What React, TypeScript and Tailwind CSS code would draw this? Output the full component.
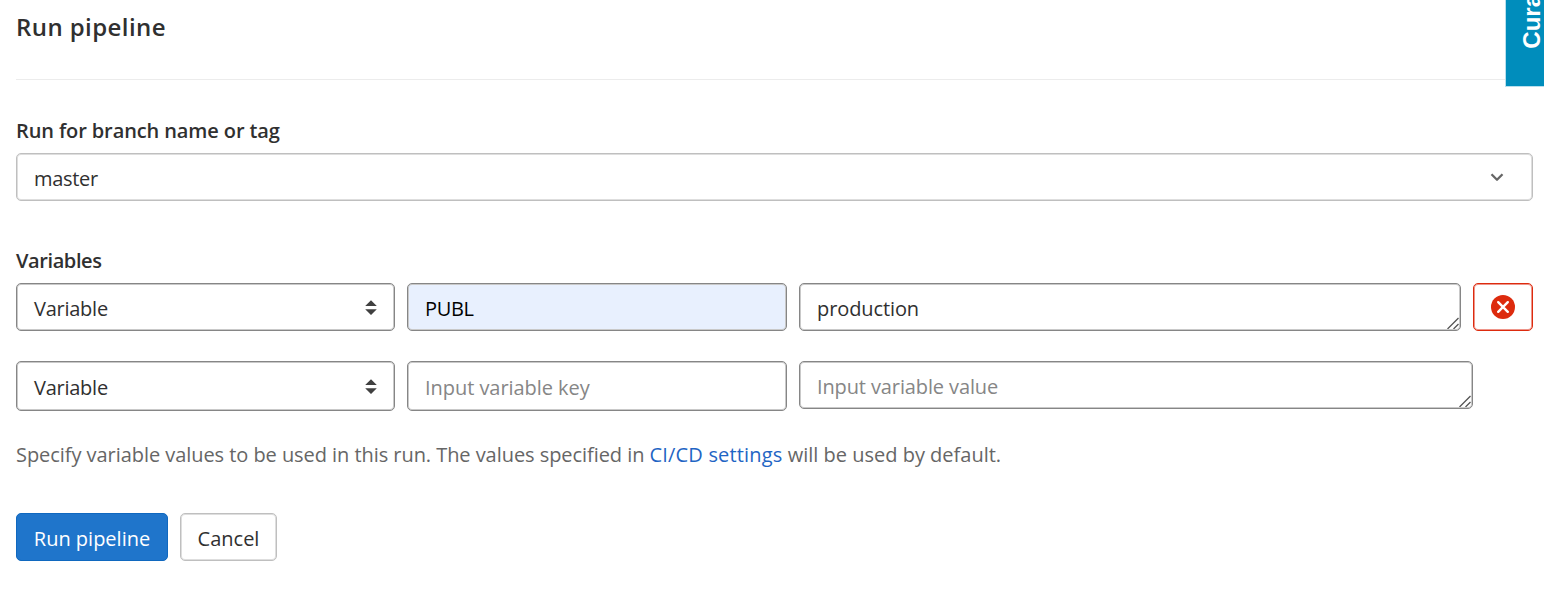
const box = "flex items-center rounded-[5px] border pl-[17px] whitespace-nowrap";
const field = `${box} border-[#868686] shadow-[inset_0_0_0_1px_#c9c9c9]`;

function SortArrows() {
  return (
    <svg className="mt-px mr-4 h-[16px] w-[14px] shrink-0" viewBox="0 0 14 16" fill="#404040">
      <path d="M7 0.3 12.8 6.1H1.2zM7 15 1.2 9.2h11.6z" />
    </svg>
  );
}

function ResizeGrip() {
  return (
    <svg className="mr-[1px] mb-[1px] ml-auto h-[12px] w-[12px] self-end" viewBox="0 0 12 12" fill="none" stroke="#555" strokeWidth="1.3">
      <path d="M0.5 12 11.5 1M6.5 12 11.5 7" />
    </svg>
  );
}

function TypeSelect({ height }: { height: string }) {
  return (
    <div className={`${field} ${height} justify-between`}>
      <span className="pt-[3px] tracking-[-0.25px]">Variable</span>
      <SortArrows />
    </div>
  );
}

export default function App() {
  return (
    <main className="relative h-[594px] w-[1544px] overflow-hidden bg-white pr-[11px] pl-4 font-['Open_Sans','Noto_Sans',sans-serif] text-[20px] text-[#303030]">
      <header className="h-20 border-b border-[#ececec] pt-[9px]">
        <h1 className="text-[24px] leading-9 font-semibold tracking-[0.42px]">Run pipeline</h1>
      </header>
      <section className="pt-9">
        <h2 className="h-[30px] leading-[30px] font-semibold tracking-[-0.11px]">Run for branch name or tag</h2>
        <div className={`${box} mt-[7px] h-12 border-[#bfbfbf] pr-7 shadow-[inset_0_0_0_1px_#dedede]`}>
          <span className="pt-[3px] tracking-[-0.3px]">master</span>
          <svg className="ml-auto h-[14px] w-[14px]" viewBox="0 0 14 14" fill="none" stroke="#666" strokeWidth="2.3" strokeLinejoin="round">
            <path d="M1.5 4.3 7 9.8 12.5 4.3" />
          </svg>
        </div>
      </section>
      <section className="pt-[45px]">
        <h2 className="h-[30px] leading-[30px] font-semibold tracking-[-0.4px]">Variables</h2>
        <div className="mt-[7px] grid grid-cols-[379px_380px_662px_60px] gap-3">
          <TypeSelect height="h-12" />
          <div className={`${field} h-12 bg-[#e8f0fe] text-black`}>
            <span className="pt-[3px] tracking-[-0.35px]">PUBL</span>
          </div>
          <div className={`${field} h-12`}>
            <span className="pt-[3px] tracking-[-0.1px]">production</span>
            <ResizeGrip />
          </div>
          <button className="flex h-12 items-center justify-center rounded-[5px] border border-[#dd2b0e] shadow-[inset_0_0_0_1px_#ee958a]">
            <svg className="h-6 w-6" viewBox="0 0 24 24">
              <circle cx="12" cy="12" r="12" fill="#dd2b0e" />
              <path d="m7.2 7.2 9.6 9.6m0-9.6-9.6 9.6" stroke="#fff" strokeWidth="2.4" strokeLinecap="round" />
            </svg>
          </button>
        </div>
        <div className="mt-[30px] grid grid-cols-[379px_380px_674px] items-start gap-3">
          <TypeSelect height="h-[50px]" />
          <div className={`${field} h-[50px] text-[#868686]`}>
            <span className="pt-[3px] tracking-[-0.05px]">Input variable key</span>
          </div>
          <div className={`${field} h-12 text-[#868686]`}>
            <span className="pt-[3px] tracking-[-0.12px]">Input variable value</span>
            <ResizeGrip />
          </div>
        </div>
        <p className="mt-[29px] h-[30px] leading-[30px] whitespace-nowrap text-[#666]">
          <span className="tracking-[-0.055px]">Specify variable values to be used in this run. The values specified in </span>
          <a className="tracking-[0.17px] text-[#1f65c4]">CI/CD settings</a> will be used by default.
        </p>
      </section>
      <div className="mt-[43px] flex gap-3">
        <button className="h-12 w-[152px] rounded-[5px] border border-[#1068bf] bg-[#1f75cb] pt-[3px] text-white">Run pipeline</button>
        <button className="h-12 w-[97px] rounded-[5px] border border-[#bfbfbf] pt-[3px] shadow-[inset_0_0_0_1px_#dedede]">Cancel</button>
      </div>
      <aside className="absolute top-0 right-0 flex h-[87px] w-[39px] items-end border-b border-l border-[#b9dfed] bg-[#008dbc] pb-[37px] pl-[12px]">
        <span className="rotate-180 font-['Liberation_Sans',sans-serif] text-[24px] leading-[27px] font-bold text-white [writing-mode:vertical-rl]">Cura</span>
      </aside>
    </main>
  );
}
